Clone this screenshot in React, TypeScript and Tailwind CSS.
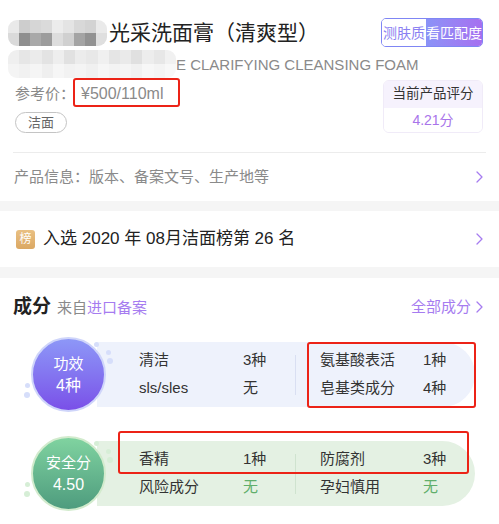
import React from 'react';

const FONT = "font-['Liberation_Sans','Noto_Sans_CJK_SC',sans-serif]";

const titleShades = [
  ['#e9e9e9', '#cdcdcd', '#d6d6d6', '#dadada', '#ececec', '#e4e4e4', '#d8d8d8', '#d3d3d3', '#eaeaea'],
  ['#dadada', '#8f8f8f', '#a9a9a9', '#9c9c9c', '#dddddd', '#d0d0d0', '#a4a4a4', '#929292', '#dfdfdf'],
];

const subShades = [
  ['#efefef', '#e6e6e6', '#ebebeb', '#e3e3e3', '#eeeeee', '#e1e1e1', '#ececec', '#e8e8e8', '#f0f0f0', '#e5e5e5', '#eaeaea', '#e0e0e0', '#ededed', '#e7e7e7', '#f1f1f1'],
  ['#f4f4f4', '#f1f1f1', '#f5f5f5', '#efefef', '#f6f6f6', '#f2f2f2', '#f4f4f4', '#f0f0f0', '#f6f6f6', '#f3f3f3', '#f5f5f5', '#f1f1f1', '#f7f7f7', '#f4f4f4', '#f8f8f8'],
];

const Mosaic: React.FC<{ rows: string[][]; className: string }> = ({ rows, className }) => (
  <div className={`flex flex-col overflow-hidden rounded-[9px] blur-[0.6px] ${className}`}>
    {rows.map((r, i) => (
      <div key={i} className="flex flex-1">
        {r.map((c, j) => (
          <div key={j} className="flex-1" style={{ backgroundColor: c }} />
        ))}
      </div>
    ))}
  </div>
);

const Chevron: React.FC<{ className?: string }> = ({ className = '' }) => (
  <svg width="7" height="12" viewBox="0 0 7 12" className={className}>
    <polyline points="1,1 6,6 1,11" fill="none" stroke="#a67cf0" strokeWidth="1.3" strokeLinecap="round" strokeLinejoin="round" />
  </svg>
);

interface Cell {
  name: string;
  value: string;
  green?: boolean;
}

const Panel: React.FC<{
  label: string;
  sub: string;
  circle: string;
  ring: string;
  bg: string;
  dot: string;
  divider: string;
  left: Cell[];
  right: Cell[];
}> = ({ label, sub, circle, ring, bg, dot, divider, left, right }) => {
  const renderCell = (c: Cell, w: string) => (
    <div key={c.name} className="flex h-[28px] items-center">
      <span className={`${w} text-[15px] text-[#333]`}>{c.name}</span>
      <span className={`text-[15px] ${c.green ? 'text-[#5fae6a]' : 'text-[#333]'}`}>{c.value}</span>
    </div>
  );
  return (
    <div className="relative ml-[31px] h-[75px] w-[445px]">
      <div className={`absolute left-[66px] top-[5px] flex h-[65px] w-[378px] items-center rounded-r-full pl-[42px] ${bg}`}>
        <div className="flex w-[156px] flex-col">{left.map((c) => renderCell(c, 'w-[104px]'))}</div>
        <div className={`h-[40px] w-px ${divider}`} />
        <div className="flex flex-col pl-[24px]">{right.map((c) => renderCell(c, 'w-[103px]'))}</div>
      </div>
      <div className={`absolute left-[63px] top-[5px] h-[5px] w-[5px] rounded-full ${dot}`} />
      <div className={`absolute left-[75px] top-[13px] h-[5px] w-[5px] rounded-full ${dot}`} />
      <div className={`absolute left-[76px] top-[21px] h-[6px] w-[6px] rounded-full ${dot}`} />
      <div className={`absolute left-[-6px] top-[46px] h-[5px] w-[5px] rounded-full ${dot}`} />
      <div className={`absolute left-[-7px] top-[55px] h-[6px] w-[6px] rounded-full ${dot}`} />
      <div className={`absolute left-0 top-0 flex h-[75px] w-[75px] flex-col items-center justify-center rounded-full border-2 text-white ${ring} ${circle}`}>
        <span className="text-[15px] leading-[22px]">{label}</span>
        <span className="text-[16px] leading-[22px]">{sub}</span>
      </div>
    </div>
  );
};

export default function App() {
  return (
    <div className={`relative h-[524px] w-[499px] overflow-hidden bg-white ${FONT}`}>
      <div className="pl-[15px] pr-[16px] pt-[18px]">
        <div className="flex items-start justify-between">
          <div className="-ml-[7px] flex h-[29px] items-center">
            <Mosaic rows={titleShades} className="h-[26px] w-[99px]" />
            <span className="ml-[2px] text-[21px] leading-none text-[#222]">光采洗面膏（清爽型）</span>
          </div>
          <div className="flex h-[29px] overflow-hidden rounded-[5px] border border-[#7f86f4] text-[14px] leading-none">
            <span className="flex items-center bg-white px-px text-[#8a7ff2]">测肤质</span>
            <span className="flex items-center bg-gradient-to-r from-[#8a93f7] to-[#a66ff0] text-white">看匹配度</span>
          </div>
        </div>
        <div className="-ml-[7px] mt-[3px] flex h-[28px] items-center">
          <Mosaic rows={subShades} className="h-[28px] w-[168px]" />
          <span className="text-[15px] leading-none text-[#8a8a8a]">E CLARIFYING CLEANSING FOAM</span>
        </div>
        <div className="mt-[2px] flex items-start justify-between">
          <div className="flex flex-col">
            <div className="flex h-[28px] items-center text-[#8a8a8a]">
              <span className="text-[15px]">参考价：</span>
              <span className="relative ml-[6px] text-[16px]">
                ¥500/110ml
                <span className="pointer-events-none absolute left-[-8px] top-[-4px] h-[29px] w-[107px] rounded-[3px] border-2 border-[#ec2317]" />
              </span>
            </div>
            <span className="mt-[4px] flex h-[21px] w-[52px] items-center justify-center rounded-full border border-[#c4c4c4] text-[13px] text-[#666]">洁面</span>
          </div>
          <div className="flex h-[53px] w-[100px] flex-col overflow-hidden rounded-[6px] border border-[#f0ebf8]">
            <span className="flex h-[27px] items-center justify-center bg-[#f6f2fd] text-[13.5px] text-[#333]">当前产品评分</span>
            <span className="flex flex-1 items-center justify-center bg-white text-[14px] text-[#a874ea]">4.21分</span>
          </div>
        </div>
      </div>
      <div className="mx-[13px] mt-[19px] h-px bg-[#ececec]" />
      <div className="flex h-[48px] items-center justify-between pl-[14px] pr-[16px]">
        <span className="text-[15px] text-[#8a8a8a]">产品信息：版本、备案文号、生产地等</span>
        <Chevron />
      </div>
      <div className="h-[10px] bg-[#f5f5f5]" />
      <div className="flex h-[56px] items-center justify-between pl-[16px] pr-[16px]">
        <div className="flex items-center">
          <span className="flex h-[19px] w-[19px] items-center justify-center rounded-[3px] bg-gradient-to-b from-[#e9c083] to-[#dba863] text-[12px] leading-none text-white">榜</span>
          <span className="ml-[8px] text-[17px] text-[#222]">入选 2020 年 08月洁面榜第 26 名</span>
        </div>
        <Chevron />
      </div>
      <div className="h-[11px] bg-[#f5f5f5]" />
      <div className="mt-[19px] flex h-[20px] items-center justify-between pl-[13px] pr-[16px]">
        <div className="flex items-baseline">
          <span className="text-[19px] font-bold text-[#222]">成分</span>
          <span className="ml-[6px] text-[15px] text-[#8a8a8a]">来自</span>
          <span className="text-[15px] text-[#a67cf0]">进口备案</span>
        </div>
        <div className="flex items-center gap-[5px] text-[15px] text-[#a67cf0]">
          <span>全部成分</span>
          <Chevron />
        </div>
      </div>
      <div className="mt-[20px]">
        <Panel
          label="功效"
          sub="4种"
          circle="bg-gradient-to-b from-[#8d97f7] to-[#7a4fe8]"
          ring="border-[#cfd5fa]"
          bg="bg-[#eef2fc]"
          dot="bg-[#d6defa]"
          divider="bg-[#d9dff2]"
          left={[
            { name: '清洁', value: '3种' },
            { name: 'sls/sles', value: '无' },
          ]}
          right={[
            { name: '氨基酸表活', value: '1种' },
            { name: '皂基类成分', value: '4种' },
          ]}
        />
      </div>
      <div className="mt-[24px]">
        <Panel
          label="安全分"
          sub="4.50"
          circle="bg-gradient-to-b from-[#80d3a0] to-[#4e9c7e]"
          ring="border-[#d2ebcd]"
          bg="bg-[#e4f1e3]"
          dot="bg-[#d6eed6]"
          divider="bg-[#cfe3cf]"
          left={[
            { name: '香精', value: '1种' },
            { name: '风险成分', value: '无', green: true },
          ]}
          right={[
            { name: '防腐剂', value: '3种' },
            { name: '孕妇慎用', value: '无', green: true },
          ]}
        />
      </div>
      <div className="pointer-events-none absolute left-[307px] top-[342px] h-[66px] w-[169px] rounded-[3px] border-2 border-[#ec2317]" />
      <div className="pointer-events-none absolute left-[118px] top-[431px] h-[43px] w-[351px] rounded-[3px] border-2 border-[#ec2317]" />
    </div>
  );
}
